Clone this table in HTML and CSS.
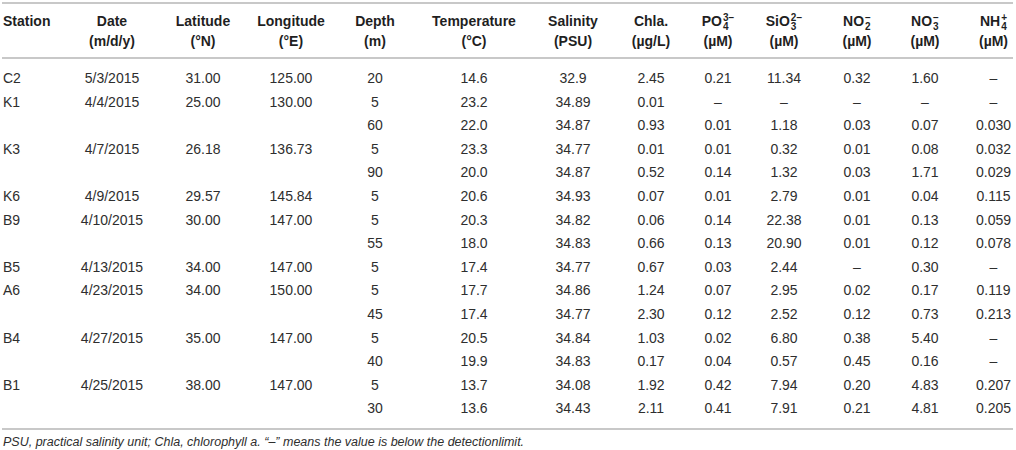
FILE: index.html
```html
<!DOCTYPE html>
<html>
<head>
<meta charset="utf-8">
<link rel="stylesheet" href="styles.css">
</head>
<body>
<div class="wrap">
<table class="data">
<colgroup>
<col class="c1"><col class="c2"><col class="c3"><col class="c4"><col class="c5"><col class="c6"><col class="c7"><col class="c8"><col class="c9"><col class="c10"><col class="c11"><col class="c12"><col class="c13">
</colgroup>
<thead>
<tr>
<th class="first">Station</th>
<th>Date<br>(m/d/y)</th>
<th>Latitude<br>(°N)</th>
<th>Longitude<br>(°E)</th>
<th>Depth<br>(m)</th>
<th>Temperature<br>(°C)</th>
<th>Salinity<br>(PSU)</th>
<th>Chla.<br>(µg/L)</th>
<th>PO<span class="ss"><span class="sup">3−</span><span class="sub">4</span></span><br>(µM)</th>
<th>SiO<span class="ss"><span class="sup">2−</span><span class="sub">3</span></span><br>(µM)</th>
<th>NO<span class="ss"><span class="sup">−</span><span class="sub">2</span></span><br>(µM)</th>
<th>NO<span class="ss"><span class="sup">−</span><span class="sub">3</span></span><br>(µM)</th>
<th class="last">NH<span class="ss"><span class="sup">+</span><span class="sub">4</span></span><br>(µM)</th>
</tr>
</thead>
<tbody>
<tr class="r1"><td class="first">C2</td><td>5/3/2015</td><td>31.00</td><td>125.00</td><td>20</td><td>14.6</td><td>32.9</td><td>2.45</td><td>0.21</td><td>11.34</td><td>0.32</td><td>1.60</td><td class="last">–</td></tr>
<tr><td class="first">K1</td><td>4/4/2015</td><td>25.00</td><td>130.00</td><td>5</td><td>23.2</td><td>34.89</td><td>0.01</td><td>–</td><td>–</td><td>–</td><td>–</td><td class="last">–</td></tr>
<tr><td class="first"></td><td></td><td></td><td></td><td>60</td><td>22.0</td><td>34.87</td><td>0.93</td><td>0.01</td><td>1.18</td><td>0.03</td><td>0.07</td><td class="last">0.030</td></tr>
<tr><td class="first">K3</td><td>4/7/2015</td><td>26.18</td><td>136.73</td><td>5</td><td>23.3</td><td>34.77</td><td>0.01</td><td>0.01</td><td>0.32</td><td>0.01</td><td>0.08</td><td class="last">0.032</td></tr>
<tr><td class="first"></td><td></td><td></td><td></td><td>90</td><td>20.0</td><td>34.87</td><td>0.52</td><td>0.14</td><td>1.32</td><td>0.03</td><td>1.71</td><td class="last">0.029</td></tr>
<tr><td class="first">K6</td><td>4/9/2015</td><td>29.57</td><td>145.84</td><td>5</td><td>20.6</td><td>34.93</td><td>0.07</td><td>0.01</td><td>2.79</td><td>0.01</td><td>0.04</td><td class="last">0.115</td></tr>
<tr><td class="first">B9</td><td>4/10/2015</td><td>30.00</td><td>147.00</td><td>5</td><td>20.3</td><td>34.82</td><td>0.06</td><td>0.14</td><td>22.38</td><td>0.01</td><td>0.13</td><td class="last">0.059</td></tr>
<tr><td class="first"></td><td></td><td></td><td></td><td>55</td><td>18.0</td><td>34.83</td><td>0.66</td><td>0.13</td><td>20.90</td><td>0.01</td><td>0.12</td><td class="last">0.078</td></tr>
<tr><td class="first">B5</td><td>4/13/2015</td><td>34.00</td><td>147.00</td><td>5</td><td>17.4</td><td>34.77</td><td>0.67</td><td>0.03</td><td>2.44</td><td>–</td><td>0.30</td><td class="last">–</td></tr>
<tr><td class="first">A6</td><td>4/23/2015</td><td>34.00</td><td>150.00</td><td>5</td><td>17.7</td><td>34.86</td><td>1.24</td><td>0.07</td><td>2.95</td><td>0.02</td><td>0.17</td><td class="last">0.119</td></tr>
<tr><td class="first"></td><td></td><td></td><td></td><td>45</td><td>17.4</td><td>34.77</td><td>2.30</td><td>0.12</td><td>2.52</td><td>0.12</td><td>0.73</td><td class="last">0.213</td></tr>
<tr><td class="first">B4</td><td>4/27/2015</td><td>35.00</td><td>147.00</td><td>5</td><td>20.5</td><td>34.84</td><td>1.03</td><td>0.02</td><td>6.80</td><td>0.38</td><td>5.40</td><td class="last">–</td></tr>
<tr><td class="first"></td><td></td><td></td><td></td><td>40</td><td>19.9</td><td>34.83</td><td>0.17</td><td>0.04</td><td>0.57</td><td>0.45</td><td>0.16</td><td class="last">–</td></tr>
<tr><td class="first">B1</td><td>4/25/2015</td><td>38.00</td><td>147.00</td><td>5</td><td>13.7</td><td>34.08</td><td>1.92</td><td>0.42</td><td>7.94</td><td>0.20</td><td>4.83</td><td class="last">0.207</td></tr>
<tr class="rl"><td class="first"></td><td></td><td></td><td></td><td>30</td><td>13.6</td><td>34.43</td><td>2.11</td><td>0.41</td><td>7.91</td><td>0.21</td><td>4.81</td><td class="last">0.205</td></tr>
</tbody>
</table>
<p class="note">PSU, practical salinity unit; Chla, chlorophyll a. “–” means the value is below the detectionlimit.</p>
</div>
</body>
</html>
```
FILE: styles.css
```css
html, body {
  margin: 0;
  padding: 0;
  background: #ffffff;
}
body {
  font-family: "Liberation Sans", Arial, Helvetica, sans-serif;
  color: #2e2e2e;
}
.wrap {
  padding: 2px 3px 0 2px;
}
.data {
  width: 1011px;
  border-collapse: collapse;
  table-layout: fixed;
  font-size: 14px;
}
.c1 { width: 60px; }
.c2 { width: 100px; }
.c3 { width: 82px; }
.c4 { width: 94px; }
.c5 { width: 74px; }
.c6 { width: 124px; }
.c7 { width: 74px; }
.c8 { width: 82px; }
.c9 { width: 52px; }
.c10 { width: 80px; }
.c11 { width: 66px; }
.c12 { width: 70px; }
.c13 { width: 53px; }
.data thead tr {
  border-top: 2px solid #c8c8c8;
  border-bottom: 2px solid #c8c8c8;
}
.data th {
  font-weight: bold;
  color: #1f1f1f;
  text-align: center;
  vertical-align: top;
  line-height: 20px;
  height: 40px;
  padding: 7px 0 6px;
  white-space: nowrap;
  overflow: hidden;
}
.data td {
  text-align: center;
  line-height: 23.6px;
  padding: 0;
  white-space: nowrap;
}
.data .first {
  text-align: left;
  padding-left: 1px;
}
.data .last {
  padding-left: 14px;
}
.data tr.r1 td {
  padding-top: 8px;
}
.data tr.rl td {
  padding-bottom: 7px;
}
.data tbody tr.rl {
  border-bottom: 2px solid #c8c8c8;
}
.ss {
  display: inline-flex;
  flex-direction: column;
  vertical-align: 5px;
  font-size: 10px;
  line-height: 9px;
  height: 9px;
  overflow: visible;
  text-align: left;
  margin-left: 1px;
}
.ss .sup, .ss .sub {
  display: block;
  height: 9px;
}
.note {
  margin: 5px 0 0 1px;
  font-size: 12.5px;
  font-style: italic;
  color: #2e2e2e;
}
```
